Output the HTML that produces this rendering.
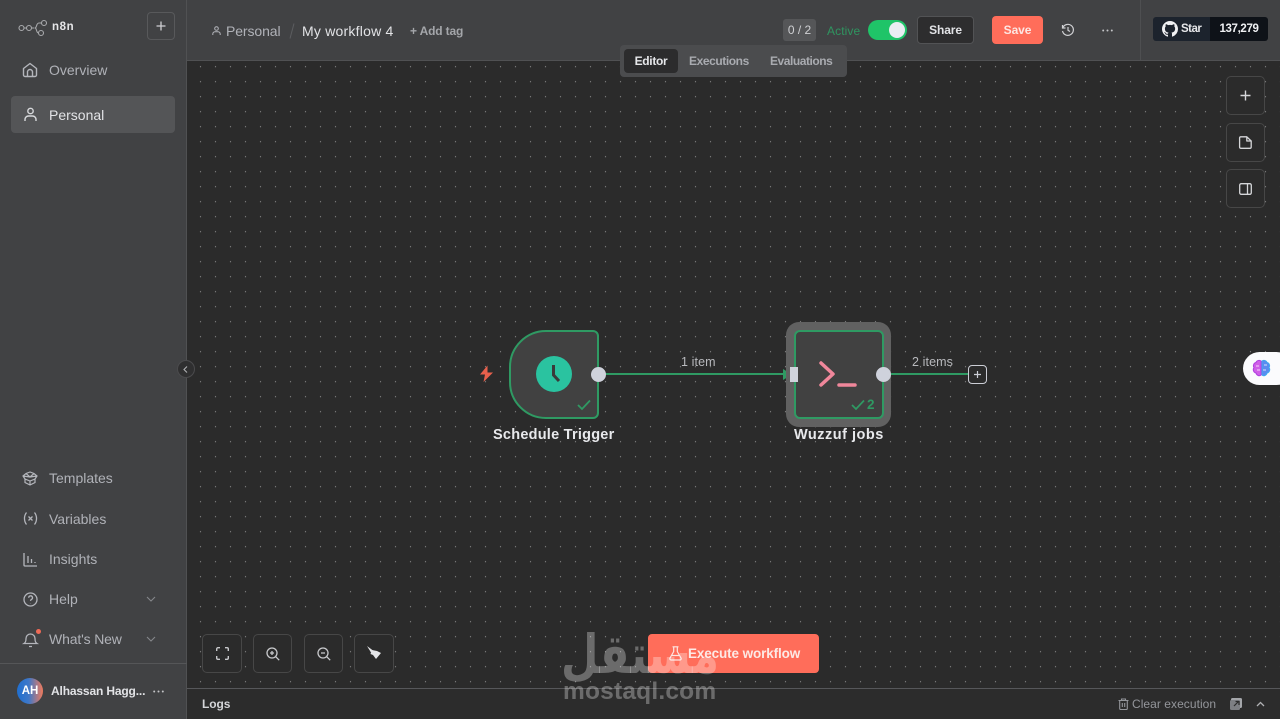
<!DOCTYPE html>
<html><head><meta charset="utf-8"><style>
html,body{margin:0;padding:0;width:1280px;height:719px;overflow:hidden;background:#2b2b2b;font-family:"Liberation Sans",sans-serif}
.a{position:absolute;white-space:nowrap;line-height:1}
.box{position:absolute;box-sizing:border-box;border:1px solid #474747;border-radius:5px;background:#2b2b2b}
svg{position:absolute;overflow:visible}
.nav{color:#b0b2b8;font-size:14px;letter-spacing:0}
</style></head><body>
<div style="position:absolute;left:187px;top:61px;width:1093px;height:627px;background-color:#2b2b2b;background-image:radial-gradient(circle at 1px 1px,#858585 .45px,transparent .85px);background-size:15px 15px;background-position:12.5px 4.7px"></div>

<!-- sidebar -->
<div style="position:absolute;left:0;top:0;width:187px;height:719px;background:#414244;border-right:1px solid #505153;box-sizing:border-box"></div>
<div style="position:absolute;left:0;top:663px;width:187px;height:1px;background:#555658"></div>
<svg style="left:18px;top:19px" width="30" height="18" fill="none" stroke="#a8a9ac" stroke-width="1.1"><circle cx="3.5" cy="9" r="2.5"/><circle cx="11" cy="9" r="2.500"/><circle cx="26" cy="4" r="2.500"/><circle cx="23" cy="14" r="2.500"/><path d="M6 9h2.500M13.500 9h3M17 9c2 0 1-5 4-5h2.500M17 9c2 0 1 5 3.500 5"/></svg>
<div class="a" style="left:52px;top:22px;font-size:11.500px;font-weight:700;color:#e6e6e8;letter-spacing:.6px">n8n</div>
<div style="position:absolute;left:147px;top:12px;width:28px;height:28px;box-sizing:border-box;border:1px solid #58595b;border-radius:4px"></div>
<svg style="left:156px;top:21px" width="10" height="10" stroke="#cfd0d3" stroke-width="1.300"><path d="M5 .5v9M.5 5h9"/></svg>
<svg style="left:22px;top:62px" width="16" height="16" fill="none" stroke="#b4b6bc" stroke-width="1.400" stroke-linejoin="round"><path d="M1.500 6.500 8 1.500l6.500 5V13a1.500 1.500 0 0 1-1.500 1.500H3A1.500 1.500 0 0 1 1.500 13z"/><path d="M5.500 14.500V10a2.500 2.500 0 0 1 5 0v4.500"/></svg>
<div class="a nav" style="left:49px;top:63px">Overview</div>
<div style="position:absolute;left:11px;top:96px;width:164px;height:37px;background:#545557;border-radius:4px"></div>
<svg style="left:23px;top:107px" width="15" height="16" fill="none" stroke="#d8d9dc" stroke-width="1.400"><circle cx="7.500" cy="4" r="2.700"/><path d="M2 14v-1.500A3.500 3.500 0 0 1 5.500 9h4a3.500 3.500 0 0 1 3.500 3.500V14"/></svg>
<div class="a nav" style="left:49px;top:108px;color:#e2e3e6">Personal</div>

<svg style="left:22px;top:471px" width="16" height="15" fill="none" stroke="#b4b6bc" stroke-width="1.200"><path d="M8 1 4 2.500 1 5l2 3 5 2 5-2 2-3-3-2.500zM3 8v3.500L8 14l5-2.500V8M8 10v4M4 2.500 8 6l4-3.500M1 5l7 1 7-1"/></svg>
<div class="a nav" style="left:49px;top:471px">Templates</div>
<svg style="left:23px;top:511px" width="15" height="15" fill="none" stroke="#b4b6bc" stroke-width="1.300"><path d="M3.500 1.500C.8 5 .8 10 3.500 13.500M11.500 1.500c2.700 3.500 2.700 8.500 0 12M5.500 5.500l4 4M9.500 5.500l-4 4"/></svg>
<div class="a nav" style="left:49px;top:512px">Variables</div>
<svg style="left:23px;top:552px" width="15" height="15" fill="none" stroke="#b4b6bc" stroke-width="1.300"><path d="M1 1v12a1 1 0 0 0 1 1h12M5 4v7M8.500 7v4M12 10v1"/></svg>
<div class="a nav" style="left:49px;top:552px">Insights</div>
<svg style="left:23px;top:592px" width="15" height="15" fill="none" stroke="#b4b6bc" stroke-width="1.300"><circle cx="7.500" cy="7.500" r="6.500"/><path d="M5.700 5.700a1.900 1.900 0 1 1 2.800 1.700c-.7.400-1 .8-1 1.500M7.500 11v.3"/></svg>
<div class="a nav" style="left:49px;top:592px">Help</div>
<svg style="left:146px;top:596px" width="10" height="7" fill="none" stroke="#85878b" stroke-width="1.100"><path d="M1 1l4 4 4-4"/></svg>
<svg style="left:23px;top:632px" width="15" height="16" fill="none" stroke="#b4b6bc" stroke-width="1.300"><path d="M1 11.500c1.500-1 2-2 2-5a4.500 4.500 0 0 1 9 0c0 3 .5 4 2 5zM6 14.500h3"/></svg>
<div style="position:absolute;left:36px;top:629px;width:5px;height:5px;border-radius:50%;background:#ef6a56"></div>
<div class="a nav" style="left:49px;top:632px;letter-spacing:-.15px">What's New</div>
<svg style="left:146px;top:636px" width="10" height="7" fill="none" stroke="#85878b" stroke-width="1.100"><path d="M1 1l4 4 4-4"/></svg>
<div style="position:absolute;left:17px;top:678px;width:26px;height:26px;border-radius:50%;background:linear-gradient(90deg,#1f6fd0 0%,#3f78c8 45%,#f07a5c 100%)"></div>
<div class="a" style="left:20px;top:686px;width:20px;text-align:center;font-size:11.500px;font-weight:700;color:#fff">AH</div>
<div class="a" style="left:51px;top:685px;font-size:12px;font-weight:700;color:#e2e3e6;letter-spacing:-.15px">Alhassan Hagg...</div>
<svg style="left:153px;top:690px" width="11" height="3" fill="#c4c5c8"><circle cx="1.200" cy="1.500" r="1"/><circle cx="5.500" cy="1.500" r="1"/><circle cx="9.800" cy="1.500" r="1"/></svg>
<div style="position:absolute;left:177px;top:360px;width:18px;height:18px;border-radius:50%;background:#2f2f30;border:1px solid #4b4b4d;box-sizing:border-box"></div>
<svg style="left:183px;top:366px" width="6" height="7" fill="none" stroke="#b0b1b4" stroke-width="1.100"><path d="M4 .5 1 3.500l3 3"/></svg>

<!-- top bar -->
<div style="position:absolute;left:187px;top:0;width:1093px;height:61px;background:#414244;border-bottom:1px solid #505153;box-sizing:border-box"></div>
<div style="position:absolute;left:1140px;top:0;width:1px;height:60px;background:#4e4f51"></div>
<svg style="left:212px;top:26px" width="9" height="10" fill="none" stroke="#b4b6bc" stroke-width="1"><circle cx="4.500" cy="2.500" r="1.800"/><path d="M.8 9V8A2.300 2.300 0 0 1 3 5.700h3A2.300 2.300 0 0 1 8.200 8v1"/></svg>
<div class="a" style="left:226px;top:24px;font-size:14px;color:#b0b2b8;letter-spacing:-.1px">Personal</div>
<svg style="left:289px;top:23px" width="6" height="16" fill="none" stroke="#5c5d60" stroke-width="1"><path d="M5 .5 1 15.500"/></svg>
<div class="a" style="left:302px;top:24px;font-size:14px;color:#e2e3e6;letter-spacing:.22px">My workflow 4</div>
<div class="a" style="left:410px;top:25px;font-size:12px;color:#a4a6aa;font-weight:700;letter-spacing:-.15px">+ Add tag</div>

<div style="position:absolute;left:783px;top:19px;width:33px;height:22px;background:#555658;border-radius:3px"></div>
<div class="a" style="left:783px;top:24px;width:33px;text-align:center;font-size:12px;color:#cfd0d3">0 / 2</div>
<div class="a" style="left:827px;top:25px;font-size:12px;color:#2f9560;letter-spacing:.1px">Active</div>
<div style="position:absolute;left:868px;top:20px;width:39px;height:20px;border-radius:10px;background:#1fc468"></div>
<div style="position:absolute;left:889px;top:22px;width:16px;height:16px;border-radius:50%;background:#e9edf2"></div>
<div style="position:absolute;left:917px;top:16px;width:57px;height:28px;box-sizing:border-box;background:#2d2d2e;border:1px solid #525355;border-radius:4px"></div>
<div class="a" style="left:917px;top:24px;width:57px;text-align:center;font-size:12px;font-weight:700;color:#e2e3e6;letter-spacing:-.1px">Share</div>
<div style="position:absolute;left:992px;top:16px;width:51px;height:28px;background:#ff6d5a;border-radius:4px"></div>
<div class="a" style="left:992px;top:24px;width:51px;text-align:center;font-size:12px;font-weight:700;color:#fde6e2;letter-spacing:-.1px">Save</div>
<svg style="left:1061px;top:23px" width="14" height="14" fill="none" stroke="#d0d1d4" stroke-width="1.200"><path d="M1.500 2v3h3M1.700 5A5.500 5.500 0 1 1 1.500 8M7 4v3.300l2 1.200"/></svg>
<svg style="left:1102px;top:29px" width="11" height="3" fill="#c4c5c8"><circle cx="1.200" cy="1.500" r="1"/><circle cx="5.500" cy="1.500" r="1"/><circle cx="9.800" cy="1.500" r="1"/></svg>

<div style="position:absolute;left:1153px;top:17px;width:57px;height:24px;background:#1c232d;border-radius:3px 0 0 3px"></div>
<div style="position:absolute;left:1210px;top:17px;width:58px;height:24px;background:#0e1218;border-radius:0 3px 3px 0"></div>
<svg style="left:1162px;top:21px" width="16" height="16" viewBox="0 0 16 16" fill="#f0f1f3"><path d="M8 0C3.580 0 0 3.580 0 8c0 3.540 2.290 6.530 5.470 7.590.4.070.55-.17.55-.38 0-.19-.01-.82-.01-1.490-2.010.37-2.530-.49-2.690-.94-.09-.23-.48-.94-.82-1.130-.28-.15-.68-.52-.01-.53.630-.01 1.080.58 1.230.82.720 1.210 1.870.87 2.330.66.070-.52.280-.87.510-1.070-1.780-.2-3.640-.89-3.640-3.950 0-.87.310-1.590.82-2.150-.08-.2-.36-1.020.08-2.120 0 0 .67-.21 2.200.82.640-.18 1.320-.27 2-.27s1.360.09 2 .27c1.530-1.040 2.200-.82 2.200-.82.440 1.100.16 1.920.08 2.120.51.560.82 1.270.82 2.150 0 3.070-1.870 3.750-3.650 3.950.29.250.54.730.54 1.480 0 1.070-.01 1.930-.01 2.200 0 .21.150.46.550.38A8.010 8.010 0 0 0 16 8c0-4.420-3.580-8-8-8z"/></svg>
<div class="a" style="left:1181px;top:24px;font-size:11.500px;font-weight:700;color:#e6e7ea;letter-spacing:-.5px">Star</div>
<div class="a" style="left:1210px;top:24px;width:58px;text-align:center;font-size:11.500px;font-weight:700;color:#f0f1f3;letter-spacing:-.35px">137,279</div>

<!-- tabs -->
<div style="position:absolute;left:620px;top:45px;width:227px;height:32px;background:#4b4c4e;border-radius:4px"></div>
<div style="position:absolute;left:624px;top:49px;width:54px;height:24px;background:#2c2c2d;border-radius:4px"></div>
<div class="a" style="left:624px;top:55px;width:54px;text-align:center;font-size:12px;font-weight:700;color:#e6e7ea;letter-spacing:-.3px">Editor</div>
<div class="a" style="left:689px;top:55px;font-size:12px;font-weight:700;color:#a9abb0;letter-spacing:-.42px">Executions</div>
<div class="a" style="left:770px;top:55px;font-size:12px;font-weight:700;color:#a9abb0;letter-spacing:-.45px">Evaluations</div>

<!-- right tools -->
<div class="box" style="left:1226px;top:76px;width:39px;height:39px"></div>
<svg style="left:1240px;top:90px" width="11" height="11" stroke="#d5d6d9" stroke-width="1.400"><path d="M5.500 .5v10M.5 5.500h10"/></svg>
<div class="box" style="left:1226px;top:123px;width:39px;height:39px"></div>
<svg style="left:1239px;top:136px" width="13" height="13" fill="none" stroke="#d5d6d9" stroke-width="1.300" stroke-linejoin="round"><path d="M1.800.8h6L12.200 5v6a1.300 1.300 0 0 1-1.300 1.300H1.800A1.300 1.300 0 0 1 .6 11V2A1.300 1.300 0 0 1 1.800.8zM7.800.8V5h4.400"/></svg>
<div class="box" style="left:1226px;top:169px;width:39px;height:39px"></div>
<svg style="left:1239px;top:183px" width="13" height="12" fill="none" stroke="#d5d6d9" stroke-width="1.300"><rect x=".7" y=".7" width="11.600" height="10.600" rx="1.500"/><path d="M8.500.7v10.600"/></svg>
<div style="position:absolute;left:1243px;top:352px;width:50px;height:33px;border-radius:17px;background:#fbfbfd"></div>
<svg style="left:1252px;top:359px" width="19" height="19" fill="none" stroke-width="1"><path d="M9 2C7 .8 4.500 1.500 4 3.500 1.500 4 .8 7 2 8.500.5 10.500 1.500 13.500 4 14c.5 2.500 3.500 3.500 5 2z" fill="#d05fe8" stroke="#b040e0"/><path d="M10 2c2-1.200 4.500-.5 5 1.500 2.500.5 3.200 3.500 2 5 1.500 2 .5 5-2 5.500-.5 2.500-3.500 3.500-5 2z" fill="#5b8bf0" stroke="#3fa8f0"/><path d="M4 7h3M5 11h3M12 6h3M11 11h3" stroke="#fff" stroke-width=".8"/></svg>

<!-- connections -->
<div style="position:absolute;left:604px;top:373px;width:180px;height:2px;background:#2f9a63"></div>
<svg style="left:783px;top:369px" width="9" height="11"><path d="M0 0l9 5.500L0 11z" fill="#2f9a63"/></svg>
<div class="a" style="left:681px;top:356px;font-size:12.500px;color:#b8b9bd;letter-spacing:.1px">1 item</div>
<div style="position:absolute;left:888px;top:373px;width:80px;height:2px;background:#2f9a63"></div>
<div class="a" style="left:912px;top:356px;font-size:12.500px;color:#b8b9bd;letter-spacing:.1px">2 items</div>
<div style="position:absolute;left:968px;top:365px;width:19px;height:19px;box-sizing:border-box;border:1.500px solid #ccced6;border-radius:4px;background:#2b2b2b"></div>
<svg style="left:973px;top:370px" width="9" height="9" stroke="#ccced6" stroke-width="1.200"><path d="M4.500 1v7M1 4.500h7"/></svg>

<!-- schedule trigger -->
<svg style="left:479px;top:365px" width="15" height="18"><path d="M8.500.5 1 9.500h5L4.500 17 14 7.500H8.500z" fill="#e8604c"/></svg>
<div style="position:absolute;left:509px;top:330px;width:90px;height:89px;box-sizing:border-box;background:#414141;border:2px solid #2f9a63;border-radius:37px 6px 6px 37px"></div>
<div style="position:absolute;left:536px;top:356px;width:36px;height:36px;border-radius:50%;background:#2ac3a0"></div>
<svg style="left:536px;top:356px" width="36" height="36" fill="none" stroke="#3a3a3a" stroke-width="3"><path d="M17.500 9v10l5.500 6"/></svg>
<svg style="left:577px;top:399px" width="14" height="11" fill="none" stroke="#2f9a63" stroke-width="1.800"><path d="M1 6l4 4 8-8.500"/></svg>
<div style="position:absolute;left:591px;top:367px;width:15px;height:15px;border-radius:50%;background:#cfd2dc"></div>
<div class="a" style="left:493px;top:428px;font-size:14.500px;font-weight:700;color:#e8e9ec;letter-spacing:.24px">Schedule Trigger</div>

<!-- wuzzuf -->
<div style="position:absolute;left:786px;top:322px;width:105px;height:105px;background:#616161;border-radius:13px"></div>
<div style="position:absolute;left:794px;top:330px;width:90px;height:89px;box-sizing:border-box;background:#414141;border:2px solid #2f9a63;border-radius:6px"></div>
<div style="position:absolute;left:790px;top:367px;width:8px;height:15px;background:#d0d3dc"></div>
<svg style="left:819px;top:361px" width="40" height="28" fill="none" stroke="#f0879b" stroke-width="3.500" stroke-linecap="round" stroke-linejoin="round"><path d="M2 2l12 11L2 24M20 24h16"/></svg>
<svg style="left:851px;top:399px" width="14" height="11" fill="none" stroke="#2f9a63" stroke-width="1.700"><path d="M1 6l4 4 8-8.500"/></svg>
<div class="a" style="left:867px;top:398px;font-size:13.500px;font-weight:700;color:#2f9a63">2</div>
<div style="position:absolute;left:876px;top:367px;width:15px;height:15px;border-radius:50%;background:#cfd2dc"></div>
<div class="a" style="left:794px;top:428px;font-size:14.500px;font-weight:700;color:#e8e9ec;letter-spacing:.5px">Wuzzuf jobs</div>

<!-- bottom tools -->
<div class="box" style="left:202px;top:634px;width:40px;height:39px"></div>
<svg style="left:216px;top:647px" width="13" height="13" fill="none" stroke="#c8c9cc" stroke-width="1.400"><path d="M.7 4V2A1.300 1.300 0 0 1 2 .7h2M9 .7h2A1.300 1.300 0 0 1 12.300 2v2M12.300 9v2A1.300 1.300 0 0 1 11 12.300H9M4 12.300H2A1.300 1.300 0 0 1 .7 11V9"/></svg>
<div class="box" style="left:253px;top:634px;width:39px;height:39px"></div>
<svg style="left:266px;top:647px" width="14" height="14" fill="none" stroke="#c8c9cc" stroke-width="1.300"><circle cx="6" cy="6" r="5"/><path d="M9.700 9.700l3.500 3.500M6 4v4M4 6h4"/></svg>
<div class="box" style="left:304px;top:634px;width:39px;height:39px"></div>
<svg style="left:317px;top:647px" width="14" height="14" fill="none" stroke="#c8c9cc" stroke-width="1.300"><circle cx="6" cy="6" r="5"/><path d="M9.700 9.700l3.500 3.500M4 6h4"/></svg>
<div class="box" style="left:354px;top:634px;width:40px;height:39px"></div>
<svg style="left:366px;top:645px" width="16" height="16"><path d="M1 1l6 4.500-2 2z" fill="#e4e5e8"/><path d="M6 5l5 1 4 2-5 6-3-4-2.500-1z" fill="#e4e5e8"/></svg>

<!-- execute -->
<div style="position:absolute;left:648px;top:634px;width:171px;height:39px;background:#ff6d5a;border-radius:4px"></div>
<svg style="left:669px;top:646px" width="13" height="15" fill="none" stroke="#fde6e2" stroke-width="1.200" stroke-linejoin="round"><path d="M3.500.8h6M4.700.8v4.700L1 12a1.300 1.300 0 0 0 1.100 2h8.800A1.300 1.300 0 0 0 12 12L8.300 5.500V.8M2.800 9.500h7.400"/></svg>
<div class="a" style="left:688px;top:647px;font-size:13.500px;font-weight:700;color:#fde9e5;letter-spacing:-.12px">Execute workflow</div>

<!-- logs -->
<div style="position:absolute;left:187px;top:688px;width:1093px;height:31px;background:#2c2c2c;border-top:1px solid #56575a;box-sizing:border-box"></div>
<div class="a" style="left:202px;top:698px;font-size:12px;font-weight:700;color:#d4d5d8;letter-spacing:-.1px">Logs</div>
<svg style="left:1118px;top:698px" width="11" height="12" fill="none" stroke="#94969b" stroke-width="1.100"><path d="M.5 2.500h10M3.500 2.500V1h4v1.500M1.700 2.500v8a1 1 0 0 0 1 1h5.600a1 1 0 0 0 1-1v-8M4.300 5v4M6.700 5v4"/></svg>
<div class="a" style="left:1132px;top:698px;font-size:12px;color:#94969b;letter-spacing:.05px">Clear execution</div>
<svg style="left:1230px;top:698px" width="12" height="12" fill="#a4a6aa"><rect x="1" y="0" width="11" height="10" rx="1.500"/><rect x="0" y="2" width="10" height="10" rx="1.500" fill="#7d7f83"/><path d="M4 8l4-4M5.500 3.500H9V7" stroke="#2c2c2c" stroke-width="1.200" fill="none"/></svg>
<svg style="left:1256px;top:701px" width="9" height="6" fill="none" stroke="#b0b1b4" stroke-width="1.300"><path d="M1 5l3.500-3.500L8 5"/></svg>

<!-- watermark -->
<div class="a" dir="rtl" style="left:340px;top:628px;width:600px;text-align:center;font-family:'DejaVu Sans',sans-serif;font-size:54px;font-weight:700;color:rgba(255,255,255,.3);transform:scaleX(.8);transform-origin:300px 0">مستقل</div>
<div class="a" style="left:563px;top:680px;font-size:24.500px;font-weight:700;color:rgba(255,255,255,.3);letter-spacing:.2px">mostaql.com</div>
</body></html>
